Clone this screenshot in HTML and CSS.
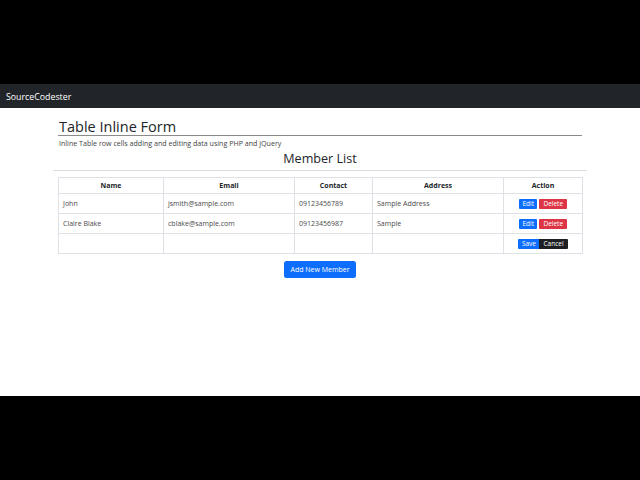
FILE: index.html
```html
<!DOCTYPE html>
<html>
<head>
<meta charset="utf-8">
<link rel="stylesheet" href="styles.css">
</head>
<body>
<div class="letterbox-top"></div>
<nav class="navbar"><span class="brand">SourceCodester</span></nav>
<main class="page">
  <div class="container">
    <h1 class="title">Table Inline Form</h1>
    <p class="subtitle">Inline Table row cells adding and editing data using PHP and jQuery</p>
    <h2 class="list-title">Member List</h2>
    <div class="rule"></div>
    <table class="members">
      <colgroup>
        <col class="c-name"><col class="c-email"><col class="c-contact"><col class="c-address"><col class="c-action">
      </colgroup>
      <thead>
        <tr><th>Name</th><th>Email</th><th>Contact</th><th>Address</th><th>Action</th></tr>
      </thead>
      <tbody>
        <tr>
          <td>John</td><td>jsmith@sample.com</td><td>09123456789</td><td>Sample Address</td>
          <td class="action"><div class="btns"><span class="btn btn-blue">Edit</span><span class="btn btn-red">Delete</span></div></td>
        </tr>
        <tr>
          <td>Claire Blake</td><td>cblake@sample.com</td><td>09123456987</td><td>Sample</td>
          <td class="action"><div class="btns"><span class="btn btn-blue">Edit</span><span class="btn btn-red">Delete</span></div></td>
        </tr>
        <tr>
          <td></td><td></td><td></td><td></td>
          <td class="action"><div class="btns group"><span class="btn btn-blue">Save</span><span class="btn btn-dark">Cancel</span></div></td>
        </tr>
      </tbody>
    </table>
    <div class="add-wrap"><span class="add-btn">Add New Member</span></div>
  </div>
</main>
<div class="letterbox-bottom"></div>
</body>
</html>
```
FILE: styles.css
```css
html, body {
  margin: 0;
  padding: 0;
  background: #000;
  font-family: "Open Sans", "Noto Sans", sans-serif;
}
.letterbox-top {
  height: 84px;
  background: #000;
}
.navbar {
  height: 24px;
  background: #212529;
  display: flex;
  align-items: center;
  padding: 1px 0 0 6px;
  box-sizing: border-box;
}
.brand {
  color: #fff;
  font-size: 8.8px;
  line-height: 10px;
}
.page {
  background: #fff;
  height: 288px;
  padding-top: 11px;
  box-sizing: border-box;
}
.container {
  width: 524px;
  margin: 0 auto;
}
.title {
  margin: 0;
  padding-left: 1px;
  font-size: 14.5px;
  line-height: 16px;
  font-weight: 400;
  color: #212529;
  border-bottom: 1px solid #8a8a8a;
}
.subtitle {
  margin: 3px 0 0 1px;
  font-size: 7.1px;
  line-height: 9px;
  color: #444;
}
.list-title {
  margin: 4px 0 0;
  text-align: center;
  font-size: 12.6px;
  line-height: 14px;
  font-weight: 400;
  color: #212529;
}
.rule {
  margin: 4px -5px 0 -5px;
  border-top: 1px solid #dcdcdc;
}
.members {
  margin-top: 6px;
  width: 524px;
  table-layout: fixed;
  border-collapse: collapse;
  font-size: 7px;
}
.c-name { width: 105px; }
.c-email { width: 131px; }
.c-contact { width: 78px; }
.c-address { width: 131px; }
.c-action { width: 79px; }
.members th, .members td {
  border: 1px solid #dee2e6;
  padding: 0 4px;
  vertical-align: middle;
  text-align: left;
  line-height: 9px;
}
.members th {
  padding-top: 3px;
  padding-bottom: 3px;
  text-align: center;
  font-weight: 700;
  color: #212529;
}
.members td {
  padding-top: 5px;
  padding-bottom: 5px;
  color: #4a4a4a;
}
.members td.action {
  padding-top: 5px;
  padding-bottom: 4px;
}
.btns {
  display: flex;
  justify-content: center;
  gap: 2px;
  height: 10px;
}
.btns.group {
  gap: 0;
}
.btn {
  display: block;
  height: 10px;
  line-height: 10px;
  font-size: 6.5px;
  color: #fff;
  padding: 0 3.5px;
  border-radius: 1px;
}
.btn-blue { background: #0d6efd; }
.btn-red { background: #dc3545; padding: 0 4px; }
.btn-dark { background: #1d1f22; padding: 0 4px; }
.group .btn-blue { border-radius: 1px 0 0 1px; }
.group .btn-dark { border-radius: 0 1px 1px 0; }
.add-wrap {
  display: flex;
  justify-content: center;
  margin-top: 7px;
}
.add-btn {
  display: block;
  height: 17px;
  line-height: 17px;
  padding: 0 6.5px;
  font-size: 7px;
  color: #fff;
  background: #0d6efd;
  border-radius: 2.5px;
}
.letterbox-bottom {
  height: 84px;
  background: #000;
}
```
